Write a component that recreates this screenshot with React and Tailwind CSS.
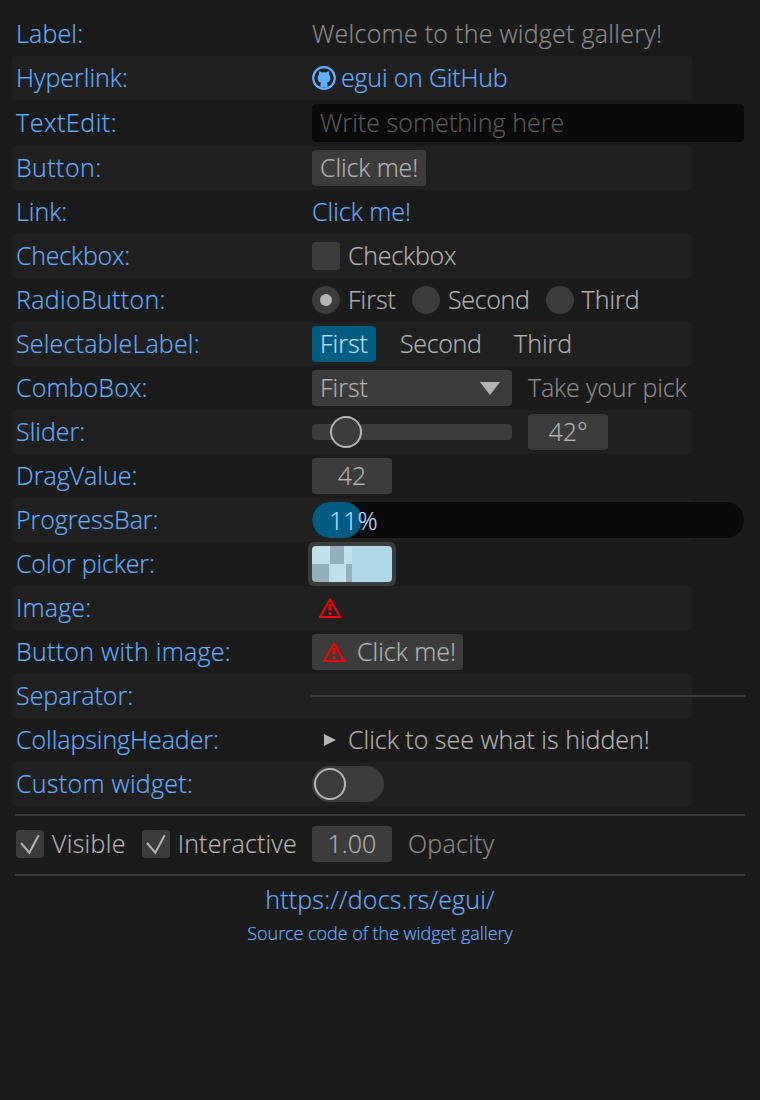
const F = { fontFamily: '"Open Sans", sans-serif' };

function T({ t = "", children }) {
  return <span className={`block pb-[3px] whitespace-nowrap ${t}`}>{children}</span>;
}

function Row({ label, lt, striped, tall, children }) {
  return (
    <div className={`flex items-center ml-3 w-[680px] rounded-[4px] pl-1 ${tall ? "h-[46px]" : "h-[44px]"} ${striped ? "bg-[#202020]" : ""}`}>
      <div className="w-[296px] shrink-0 text-[#62aeff]"><T t={lt}>{label}</T></div>
      <div className="flex items-center whitespace-nowrap">{children}</div>
    </div>
  );
}

function Warn({ className }) {
  return (
    <svg viewBox="0 0 22 20" className={className} fill="none">
      <path d="M11 1.2 L21 19 H1 Z" stroke="#ff0000" strokeWidth="1.9" strokeLinejoin="miter" />
      <path d="M11 6 V12.5" stroke="#ff0000" strokeWidth="3" />
      <circle cx="11" cy="15.4" r="1.6" fill="#ff0000" />
    </svg>
  );
}

function Check() {
  return (
    <span className="w-7 h-7 rounded-[4px] bg-[#3c3c3c] flex items-center justify-center shrink-0">
      <svg viewBox="0 0 28 28" className="w-7 h-7" fill="none">
        <path d="M5 13 L13.3 22.7 L22.7 5.3" stroke="#b4b4b4" strokeWidth="2" />
      </svg>
    </span>
  );
}

export default function App() {
  return (
    <div className="w-[760px] h-[1100px] bg-[#1b1b1b] pt-3 text-[25px] leading-[30px] font-light [-webkit-text-stroke:0.2px] text-[#b4b4b4] overflow-hidden" style={F}>
      <Row label="Label:" lt="tracking-[0.17px]"><span className="text-[#8c8c8c]"><T t="tracking-[0.27px]">Welcome to the widget gallery!</T></span></Row>
      <Row label="Hyperlink:" striped>
        <span className="flex items-center gap-[5px] text-[#62aeff]">
          <svg viewBox="0 0 24 24" className="w-6 h-6" fill="#62aeff">
            <circle cx="12" cy="12" r="10.8" fill="none" stroke="#62aeff" strokeWidth="2.2" />
            <path d="M7.4 5 L10 6.4 Q12 6 14 6.4 L16.6 5 Q17.3 7.2 17 8.6 Q18.4 10.2 18.4 12.4 Q18.4 15.8 14.8 16.6 Q15.6 17.4 15.6 18.8 V21.5 H8.4 V18.8 Q8.4 17.4 9.2 16.6 Q5.6 15.8 5.6 12.4 Q5.6 10.2 7 8.6 Q6.7 7.2 7.4 5 Z" />
          </svg>
          <T t="tracking-[-0.2px]">egui on GitHub</T>
        </span>
      </Row>
      <Row label="TextEdit:" lt="tracking-[0.55px]" tall>
        <div className="w-[432px] h-[38px] rounded-[4px] bg-[#0a0a0a] px-2 flex items-center text-[#5a5a5a]"><T t="tracking-[0.05px]">Write something here</T></div>
      </Row>
      <Row label="Button:" lt="tracking-[0.43px]" striped>
        <div className="h-9 px-2 rounded-[4px] bg-[#3c3c3c] flex items-center"><T t="tracking-[-0.11px]">Click me!</T></div>
      </Row>
      <Row label="Link:"><span className="text-[#62aeff]"><T>Click me!</T></span></Row>
      <Row label="Checkbox:" lt="tracking-[-0.22px]" striped>
        <span className="w-7 h-7 rounded-[4px] bg-[#3c3c3c] mr-2" /><T t="tracking-[-0.22px]">Checkbox</T>
      </Row>
      <Row label="RadioButton:" lt="tracking-[0.33px]">
        <span className="w-7 h-7 rounded-full bg-[#3c3c3c] mr-2 flex items-center justify-center"><span className="w-3 h-3 rounded-full bg-[#b4b4b4]" /></span>
        <span className="mr-4"><T>First</T></span>
        <span className="w-7 h-7 rounded-full bg-[#3c3c3c] mr-2" />
        <span className="mr-4"><T t="tracking-[-0.33px]">Second</T></span>
        <span className="w-7 h-7 rounded-full bg-[#3c3c3c] mr-2" />
        <T>Third</T>
      </Row>
      <Row label="SelectableLabel:" lt="tracking-[0.19px]" striped>
        <span className="h-9 px-2 rounded-[4px] bg-[#005c80] text-[#c0deff] flex items-center mr-4"><T>First</T></span>
        <span className="pl-2 pr-2 mr-[16.5px]"><T t="tracking-[-0.33px]">Second</T></span>
        <span className="px-2"><T>Third</T></span>
      </Row>
      <Row label="ComboBox:" lt="tracking-[0.11px]">
        <div className="w-[200px] h-9 pl-2 pr-3 rounded-[4px] bg-[#3c3c3c] flex items-center justify-between mr-4">
          <T>First</T>
          <svg viewBox="0 0 20 13" className="w-5 h-[13px]"><path d="M0 0 H20 L10 13 Z" fill="#b4b4b4" /></svg>
        </div>
        <span className="text-[#8c8c8c]"><T t="tracking-[-0.14px]">Take your pick</T></span>
      </Row>
      <Row label="Slider:" striped>
        <div className="relative w-[200px] h-4 rounded-[4px] bg-[#3c3c3c] mr-4">
          <span className="absolute left-[18px] top-[-8px] w-8 h-8 rounded-full bg-[#3c3c3c] border-2 border-[#b4b4b4]" />
        </div>
        <div className="w-20 h-9 rounded-[4px] bg-[#3c3c3c] flex items-center justify-center"><T>42°</T></div>
      </Row>
      <Row label="DragValue:">
        <div className="w-20 h-9 rounded-[4px] bg-[#3c3c3c] flex items-center justify-center"><T>42</T></div>
      </Row>
      <Row label="ProgressBar:" lt="tracking-[-0.08px]" striped>
        <div className="relative w-[432px] h-9 rounded-full bg-[#0a0a0a] overflow-hidden">
          <div className="h-9 w-[50px] rounded-full bg-[#005c80]" />
          <span className="absolute left-[17px] top-[3px] text-[#c0deff]"><T>11%</T></span>
        </div>
      </Row>
      <Row label="Color picker:" lt="tracking-[-0.15px]">
        <div className="w-[88px] h-[44px] rounded-[6px] bg-[#3c3c3c] -ml-1 flex items-center justify-center">
          <div className="w-20 h-9 rounded-[4px] overflow-hidden flex">
            <div className="w-10 h-9 flex flex-col">
              <div className="h-[18px] flex">
                <span className="w-[18px] bg-[#bfdfec]" /><span className="w-[14px] bg-[#93b0bc]" /><span className="w-2 bg-[#bfdfec]" />
              </div>
              <div className="h-[18px] flex">
                <span className="w-[17px] bg-[#93b0bc]" /><span className="w-[17px] bg-[#bfdfec]" /><span className="w-[6px] bg-[#93b0bc]" />
              </div>
            </div>
            <div className="flex-1 bg-[#add8e6]" />
          </div>
        </div>
      </Row>
      <Row label="Image:" lt="tracking-[0.17px]" striped>
        <Warn className="w-[22px] h-5 ml-[7px]" />
      </Row>
      <Row label="Button with image:" lt="tracking-[0.28px]">
        <div className="h-9 pl-[11px] pr-[7px] rounded-[4px] bg-[#3c3c3c] flex items-center gap-3">
          <Warn className="w-[22px] h-5" /><T>Click me!</T>
        </div>
      </Row>
      <Row label="Separator:" striped>
        <div className="w-[434px] -ml-px h-0.5 bg-[#3c3c3c]" />
      </Row>
      <Row label="CollapsingHeader:" lt="tracking-[-0.06px]">
        <svg viewBox="0 0 12 12" className="w-3 h-3 ml-3 mr-3"><path d="M0 0 L12 6 L0 12 Z" fill="#b4b4b4" /></svg>
        <T>Click to see what is hidden!</T>
      </Row>
      <Row label="Custom widget:" lt="tracking-[0.29px]" striped>
        <div className="relative w-[72px] h-9 rounded-full bg-[#3c3c3c]">
          <span className="absolute left-[2px] top-[2px] w-8 h-8 rounded-full border-2 border-[#b4b4b4]" />
        </div>
      </Row>
      <div className="ml-[15px] w-[730px] h-0.5 bg-[#3c3c3c] mt-2" />
      <div className="flex items-center h-[58px] pb-[2px] ml-4 whitespace-nowrap">
        <Check /><span className="ml-2 mr-4"><T t="tracking-[0.29px]">Visible</T></span>
        <Check /><span className="ml-2 mr-[15px]"><T t="tracking-[0.18px]">Interactive</T></span>
        <div className="w-20 h-9 rounded-[4px] bg-[#3c3c3c] flex items-center justify-center mr-4"><T>1.00</T></div>
        <span className="text-[#8c8c8c]"><T t="tracking-[0.29px]">Opacity</T></span>
      </div>
      <div className="ml-[15px] w-[730px] h-0.5 bg-[#3c3c3c]" />
      <div className="text-center text-[#62aeff] w-[760px] mt-2"><T t="tracking-[0.19px]">https://docs.rs/egui/</T></div>
      <div className="text-center text-[#62aeff] w-[760px] text-[18px] leading-[24px] mt-1 tracking-[-0.06px]">Source code of the widget gallery</div>
    </div>
  );
}
